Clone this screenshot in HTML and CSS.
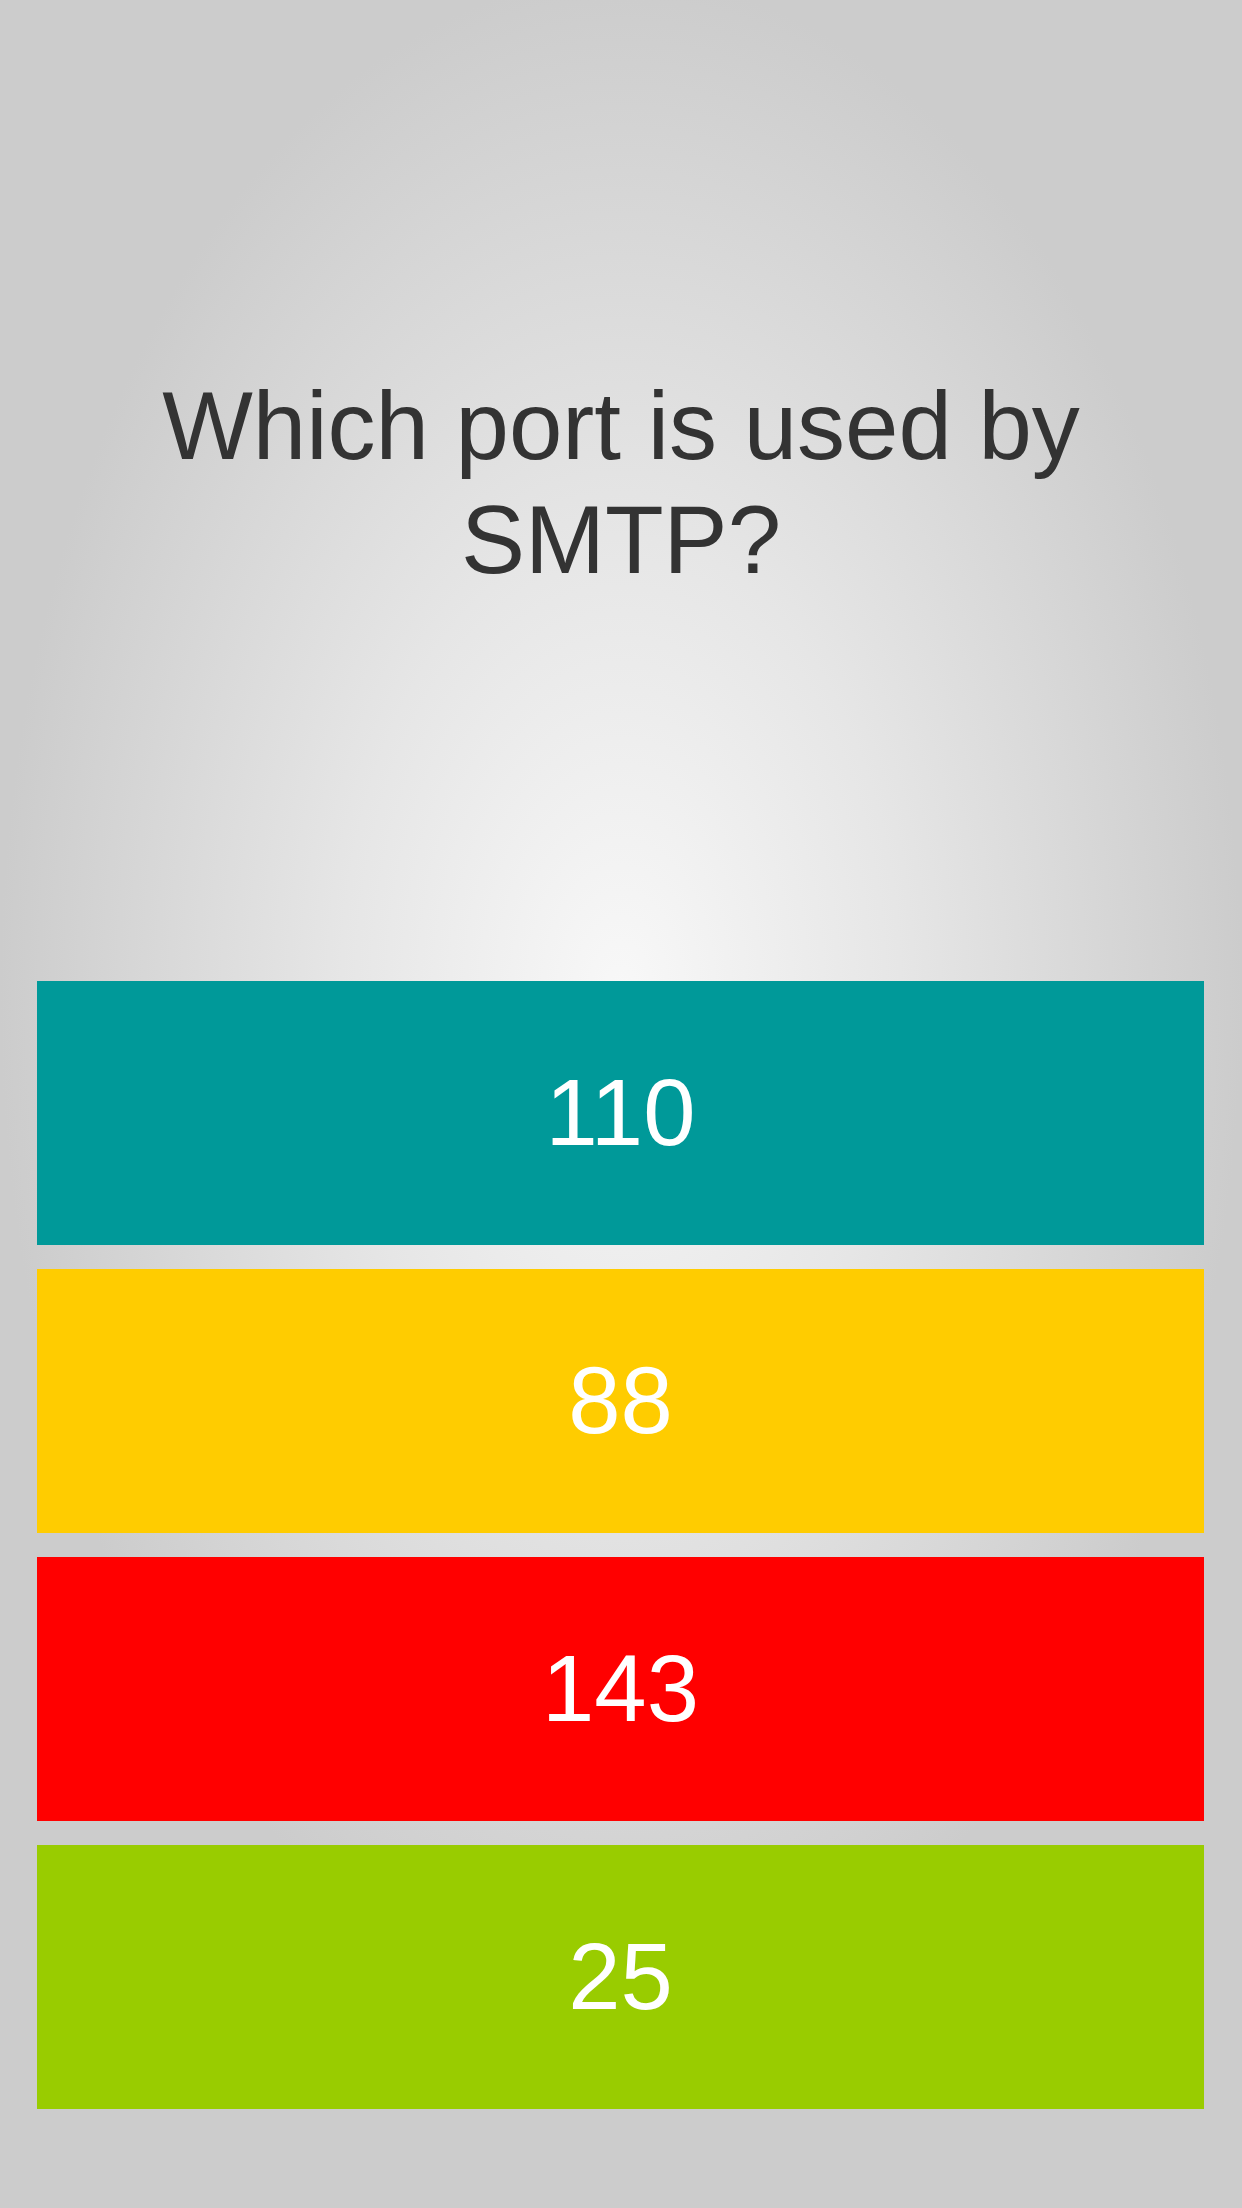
FILE: index.html
```html
<!DOCTYPE html>
<html lang="en">
<head>
    <meta charset="UTF-8">
    <meta name="viewport" content="width=device-width, initial-scale=1.0">
    <title>Quiz</title>
    <link rel="stylesheet" href="styles.css">
</head>
<body>
    <div class="quiz">
        <div class="question">
            <h1>Which port is used by SMTP?</h1>
        </div>

        <div class="answers">
            <button class="answer teal">110</button>
            <button class="answer yellow">88</button>
            <button class="answer red">143</button>
            <button class="answer green">25</button>
        </div>
    </div>
</body>
</html>
```

FILE: styles.css
```css
* {
    margin: 0;
    padding: 0;
    box-sizing: border-box;
    font-family: 'Liberation Sans', Arial, sans-serif;
}

body {
    width: 1242px;
    height: 2208px;
    background-color: #cccccc;
    background-image: radial-gradient(50% 46% at 50% 45%, #f8f8f8 0%, #e6e6e6 45%, #cccccc 100%);
}

.quiz {
    display: flex;
    flex-direction: column;
    height: 100%;
}

.question {
    flex: 1;
    display: flex;
    align-items: center;
    justify-content: center;
    padding: 0 100px 15px;
}

.question h1 {
    font-size: 96px;
    font-weight: normal;
    line-height: 114px;
    color: #333333;
    text-align: center;
}

.answers {
    display: flex;
    flex-direction: column;
    gap: 24px;
    padding: 0 38px 99px 37px;
}

.answer {
    height: 264px;
    border: none;
    color: white;
    font-size: 94px;
    display: flex;
    align-items: center;
    justify-content: center;
}

.teal { background: #009999; }
.yellow { background: #ffcc00; }
.red { background: #ff0000; }
.green { background: #99cc00; }
```
